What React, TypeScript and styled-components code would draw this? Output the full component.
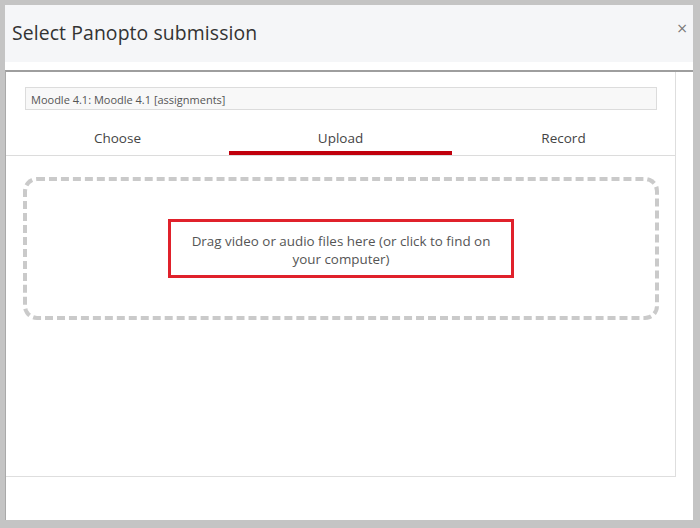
import React from "react";
import styled, { createGlobalStyle } from "styled-components";

const Global = createGlobalStyle`
  html, body { margin: 0; padding: 0; }
  body { background: #c4c4c4; font-family: "Open Sans", "Liberation Sans", sans-serif; }
  * { box-sizing: border-box; }
`;

const Page = styled.div`
  width: 700px;
  height: 528px;
  background: #c4c4c4;
  padding: 5px 7px 8px 5px;
  display: flex;
`;

const Modal = styled.div`
  flex: 1;
  background: #ffffff;
  display: flex;
  flex-direction: column;
`;

const Header = styled.div`
  height: 57px;
  background: #f5f6f8;
  display: flex;
  align-items: center;
  justify-content: space-between;
  padding: 0 5px 2px 7px;
`;

const Title = styled.h1`
  margin: 0;
  font-size: 19.4px;
  font-weight: 400;
  color: #333;
  letter-spacing: 0.1px;
`;

const Close = styled.button`
  border: none;
  background: none;
  padding: 0 0 10px;
  font-size: 14px;
  line-height: 1;
  color: #777;
  font-family: "DejaVu Sans", sans-serif;
  cursor: pointer;
`;

const Gap = styled.div`
  height: 8px;
`;

const Frame = styled.div`
  flex: 1;
  border-top: 2px solid #9e9e9e;
  border-left: 1px solid #a9a9a9;
  padding-bottom: 43px;
  display: flex;
`;

const Content = styled.div`
  width: 670px;
  border-right: 1px solid #dedede;
  border-bottom: 1px solid #dedede;
  display: flex;
  flex-direction: column;
`;

const Select = styled.div`
  margin: 15px 18px 0 19px;
  height: 23px;
  background: #f8f8f8;
  border: 1px solid #dcdcdc;
  font-size: 11px;
  color: #555;
  display: flex;
  align-items: center;
  padding: 1px 0 0 5px;
`;

const Tabs = styled.div`
  display: grid;
  grid-template-columns: repeat(3, 1fr);
  margin-top: 10px;
  border-bottom: 1px solid #dcdcdc;
`;

const Tab = styled.div<{ $active?: boolean }>`
  height: 35px;
  display: flex;
  align-items: center;
  justify-content: center;
  font-size: 13.5px;
  font-weight: 500;
  color: #444;
  padding-top: 5px;
  border-bottom: 4px solid ${(p) => (p.$active ? "#c0000c" : "transparent")};
`;

const DropZone = styled.div`
  margin: 21px 16px 0 17px;
  height: 143px;
  border: 4px dashed #cacaca;
  border-radius: 14px;
  display: flex;
  align-items: center;
  justify-content: center;
`;

const Prompt = styled.div`
  width: 346px;
  height: 59px;
  border: 3px solid #e0212b;
  display: flex;
  align-items: center;
  justify-content: center;
  text-align: center;
  font-size: 13.4px;
  line-height: 18px;
  color: #555;
  padding: 3px 16px 0;
`;

export default function App() {
  return (
    <>
      <Global />
      <Page>
        <Modal>
          <Header>
            <Title>Select Panopto submission</Title>
            <Close aria-label="Close">×</Close>
          </Header>
          <Gap />
          <Frame>
            <Content>
              <Select>Moodle 4.1: Moodle 4.1 [assignments]</Select>
              <Tabs>
                <Tab>Choose</Tab>
                <Tab $active>Upload</Tab>
                <Tab>Record</Tab>
              </Tabs>
              <DropZone>
                <Prompt>
                  Drag video or audio files here (or click to find on your computer)
                </Prompt>
              </DropZone>
            </Content>
          </Frame>
        </Modal>
      </Page>
    </>
  );
}
